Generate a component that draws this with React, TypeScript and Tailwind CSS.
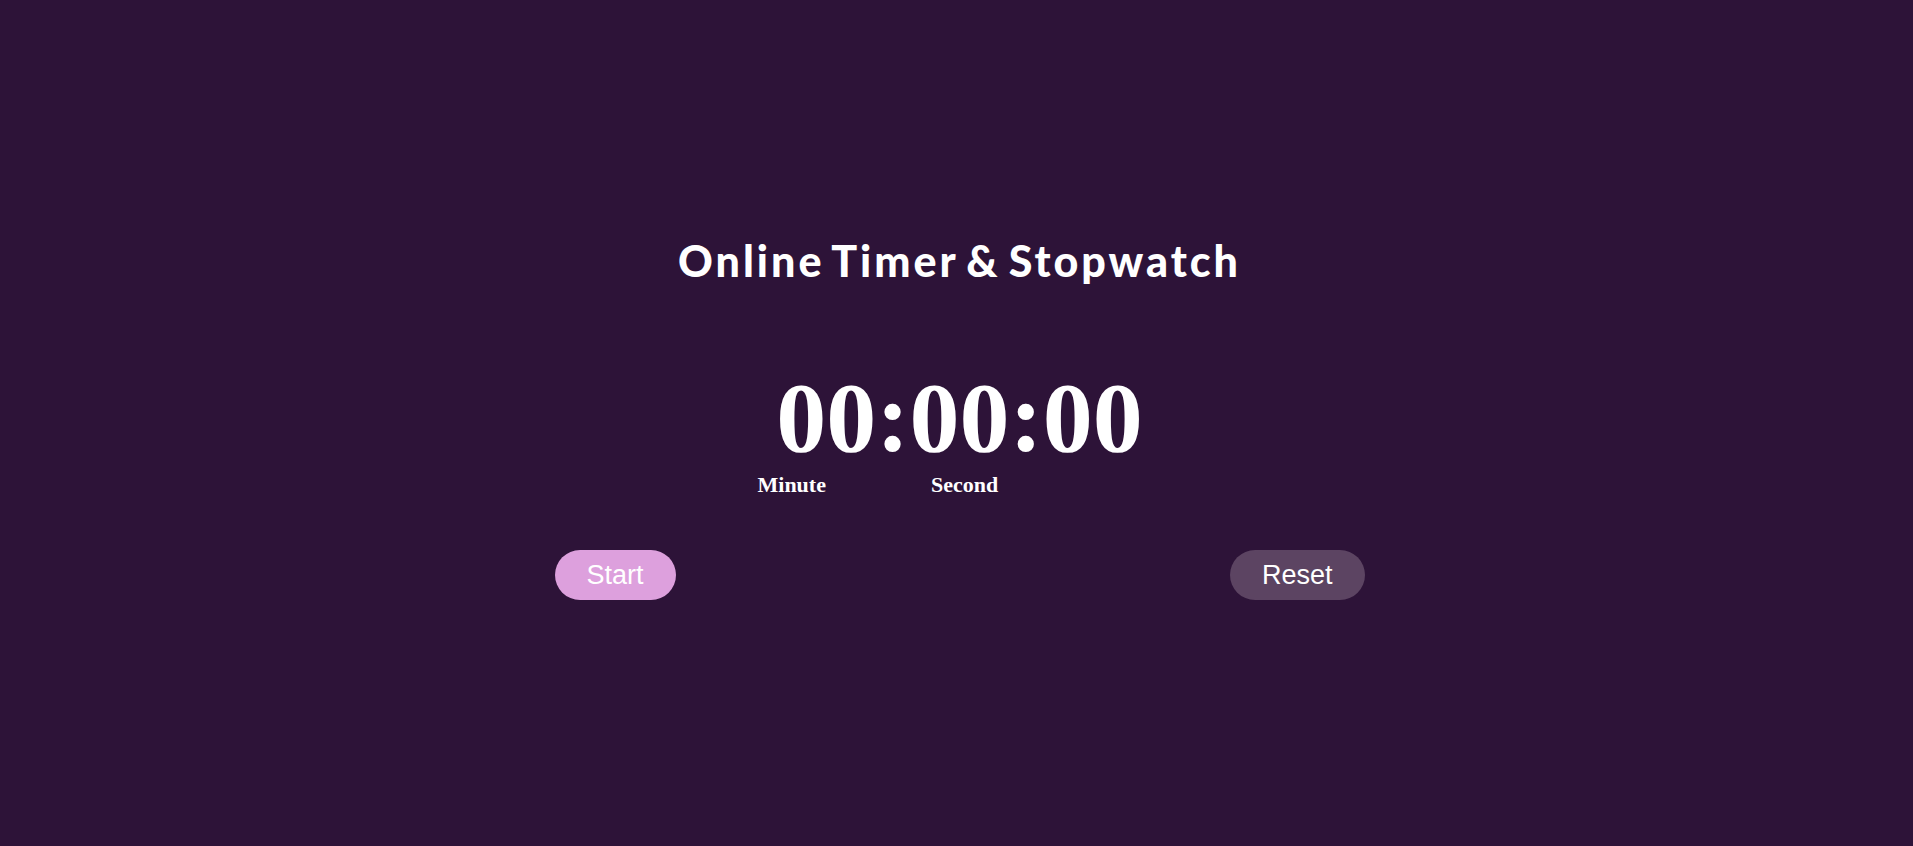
import React from "react";

export default function App() {
  return (
    <div className="min-h-[846px] w-full bg-[#2d1338] flex flex-col items-center pl-[6px]">
      <h1
        className="mt-[240px] text-[43px] leading-[42px] font-black tracking-[3px] text-white"
        style={{ fontFamily: "Lato, 'Open Sans', sans-serif", wordSpacing: "-5px" }}
      >
        Online Timer &amp; Stopwatch
      </h1>
      <div
        className="mt-[86px] text-[100px] leading-[100px] font-bold text-white"
        style={{ fontFamily: "'Liberation Serif', 'Times New Roman', serif" }}
      >
        00:00:00
      </div>
      <div
        className="mt-[6px] w-[404px] flex text-[22px] leading-[22px] font-bold text-white"
        style={{ fontFamily: "'Liberation Serif', 'Times New Roman', serif" }}
      >
        <span>Minute</span>
        <span className="ml-[105px]">Second</span>
      </div>
      <div
        className="mt-[54px] w-[810px] flex justify-between"
        style={{ fontFamily: "'Liberation Sans', Arial, sans-serif" }}
      >
        <button className="h-[50px] px-[32px] rounded-[25px] bg-[#dda0dd] text-white text-[27px]">
          Start
        </button>
        <button className="h-[50px] px-[32px] rounded-[25px] bg-[#5c4462] text-white text-[27px]">
          Reset
        </button>
      </div>
    </div>
  );
}
